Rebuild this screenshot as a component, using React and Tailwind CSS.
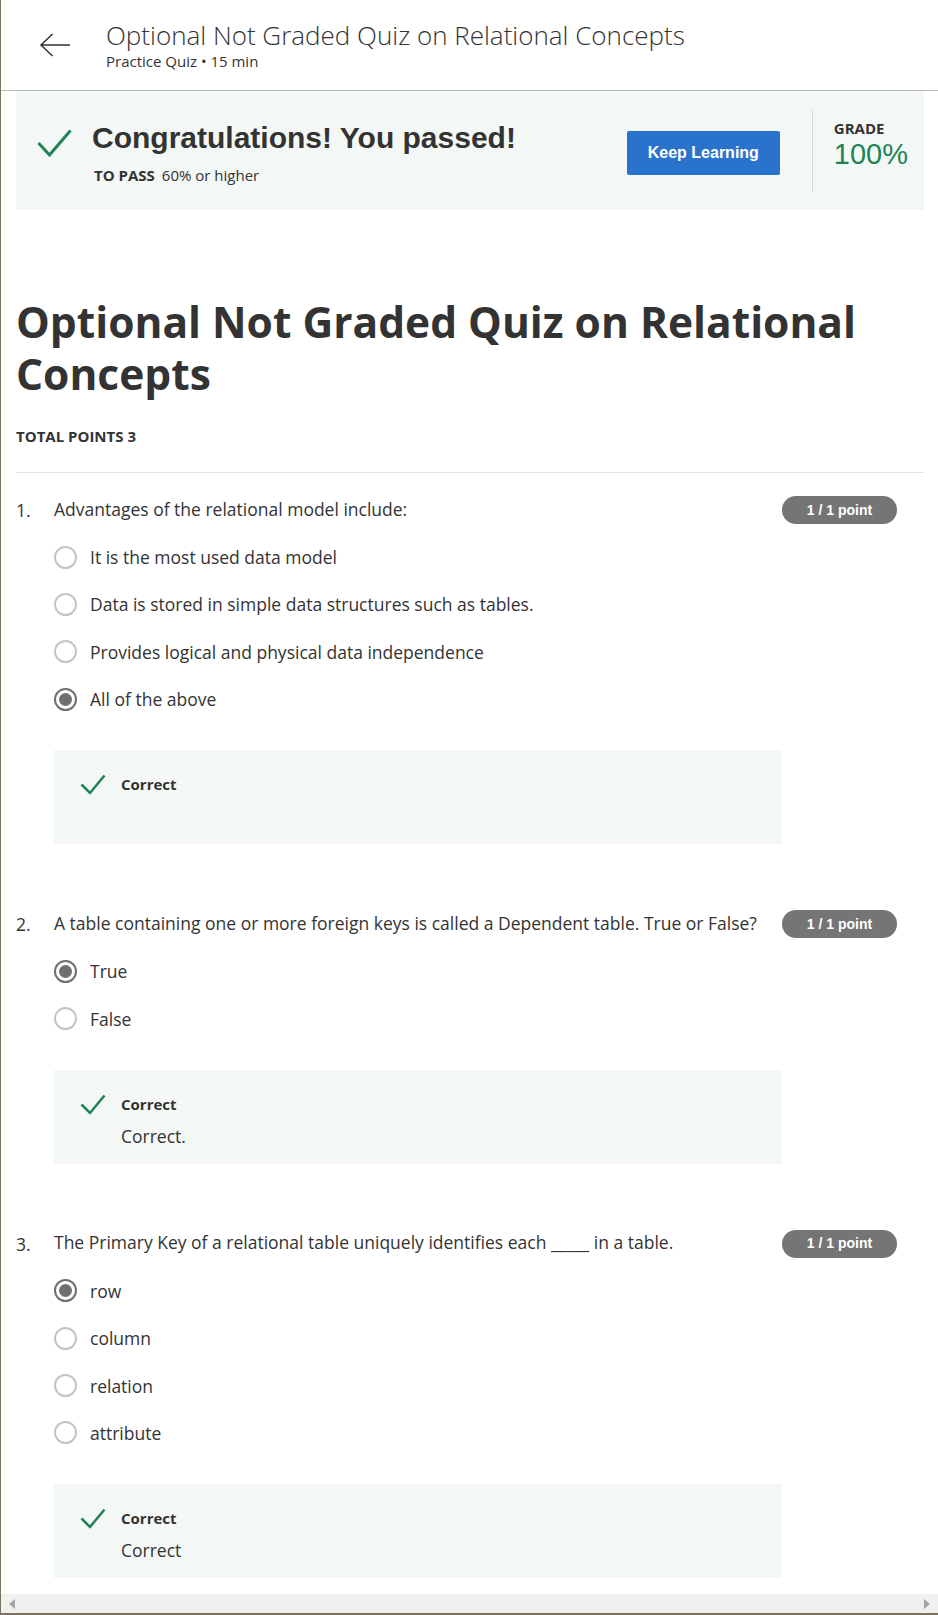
import React from "react";

const font = { fontFamily: '"Open Sans", "Liberation Sans", sans-serif' };

function BigCheck() {
  return (
    <svg width="35" height="28" viewBox="0 0 35 28" fill="none">
      <path d="M1.5 14 L12.5 26 L33.5 1.5" stroke="#1f8354" strokeWidth="3" />
    </svg>
  );
}

function SmallCheck() {
  return (
    <svg width="26" height="21" viewBox="0 0 26 21" fill="none">
      <path d="M1.5 10.5 L10 19 L24.5 1.5" stroke="#1f8354" strokeWidth="2.5" />
    </svg>
  );
}

function Radio({ checked }) {
  if (checked) {
    return (
      <span className="flex h-[23px] w-[23px] shrink-0 items-center justify-center rounded-full border-2 border-[#6f6f6f]">
        <span className="h-[13px] w-[13px] rounded-full bg-[#6f6f6f]" />
      </span>
    );
  }
  return <span className="h-[23px] w-[23px] shrink-0 rounded-full border-2 border-[#c4c4c4]" />;
}

function Question({ num, text, options, selected, explanation }) {
  return (
    <div>
      <div className="flex items-center">
        <span className="w-[38px] shrink-0 text-[17.5px] leading-6 text-[#333]">{num}.</span>
        <span className="-mt-[3px] flex-1 text-[17.5px] leading-6 text-[#333]">{text}</span>
        <span
          className="mr-[27px] flex h-[28px] w-[115px] shrink-0 items-center justify-center rounded-full bg-[#757575] text-[14px] font-bold text-white"
          style={{ fontFamily: '"Liberation Sans", Arial, sans-serif' }}
        >
          1 / 1 point
        </span>
      </div>
      <div className="mt-[9.5px] ml-[38px] flex flex-col">
        {options.map((o, i) => (
          <div key={o} className="flex h-[47.3px] items-center gap-[13px]">
            <Radio checked={i === selected} />
            <span className="text-[17.5px] leading-6 text-[#333]">{o}</span>
          </div>
        ))}
      </div>
      <div className="mt-[27.5px] ml-[38px] w-[728px] bg-[#f3f8f6] pt-[24px] pb-[16px] pl-[26px]">
        <div className="flex items-start gap-[15px]">
          <SmallCheck />
          <div className="flex flex-col">
            <span className="text-[15px] font-bold leading-5 text-[#333]">Correct</span>
            <span className="mt-[10px] h-6 text-[17.5px] leading-6 text-[#333]">{explanation}</span>
          </div>
        </div>
      </div>
    </div>
  );
}

export default function App() {
  return (
    <div
      className="flex h-[1615px] w-[938px] flex-col overflow-hidden border-b-2 border-l border-[#7a7361] bg-white"
      style={font}
    >
      <div className="flex-1 overflow-hidden">
        {/* Header */}
        <div className="flex h-[91px] items-center border-b border-[#b9b9b9] pl-[38px]">
          <svg width="32" height="26" viewBox="0 0 32 26" fill="none" className="shrink-0">
            <path d="M31 13 H2 M13.5 2 L2 13 L13.5 24" stroke="#333" strokeWidth="1.5" />
          </svg>
          <div className="ml-[35px] flex flex-col">
            <span className="text-[26px] font-light leading-[30px] text-[#333]">
              Optional Not Graded Quiz on Relational Concepts
            </span>
            <span className="mt-[1px] text-[15px] leading-5 text-[#333]">Practice Quiz • 15 min</span>
          </div>
        </div>

        <div className="pl-[15px] pr-[14px]">
          {/* Banner */}
          <div className="flex h-[119px] items-center bg-[#f3f8f6] pl-[21px] pr-[16px]">
            <div className="flex items-start gap-[20px] self-start pt-[29px]">
              <div className="mt-[9px]">
                <BigCheck />
              </div>
              <div className="flex flex-col">
                <span
                  className="text-[30px] font-bold leading-[36px] text-[#333]"
                  style={{ fontFamily: '"Liberation Sans", Arial, sans-serif' }}
                >
                  Congratulations! You passed!
                </span>
                <div className="mt-[10px] flex items-baseline pl-[2px] leading-[18px] text-[#333]">
                  <span className="text-[15px] font-bold">TO PASS</span>
                  <span className="ml-[7px] text-[15px]">60% or higher</span>
                </div>
              </div>
            </div>
            <button
              className="ml-auto mt-[5px] h-[44px] w-[153px] rounded-[2px] bg-[#2a73cc] text-[16px] font-bold text-white"
              style={{ fontFamily: '"Liberation Sans", Arial, sans-serif' }}
            >
              Keep Learning
            </button>
            <div className="ml-[32px] h-[83px] w-px bg-[#dcdcdc]" />
            <div className="ml-[21px] flex flex-col self-start pt-[28px]">
              <span className="text-[15px] font-bold leading-[18px] text-[#333]">GRADE</span>
              <span
                className="text-[29px] leading-[34px] text-[#1f8354]"
                style={{ fontFamily: '"Liberation Sans", Arial, sans-serif' }}
              >
                100%
              </span>
            </div>
          </div>

          {/* Title */}
          <h1 className="mt-[86px] text-[42.5px] font-bold leading-[52px] text-[#333]">
            Optional Not Graded Quiz on Relational Concepts
          </h1>
          <div className="mt-[26px] text-[15px] font-bold leading-5 text-[#333]">TOTAL POINTS 3</div>
          <div className="mt-[26px] h-px bg-[#e1e1e1]" />

          <div className="mt-[23px] flex flex-col gap-[66px]">
            <Question
              num={1}
              text="Advantages of the relational model include:"
              options={[
                "It is the most used data model",
                "Data is stored in simple data structures such as tables.",
                "Provides logical and physical data independence",
                "All of the above",
              ]}
              selected={3}
              explanation=""
            />
            <Question
              num={2}
              text="A table containing one or more foreign keys is called a Dependent table. True or False?"
              options={["True", "False"]}
              selected={0}
              explanation="Correct."
            />
            <Question
              num={3}
              text="The Primary Key of a relational table uniquely identifies each _____ in a table."
              options={["row", "column", "relation", "attribute"]}
              selected={0}
              explanation="Correct"
            />
          </div>
        </div>
      </div>

      {/* Horizontal scrollbar */}
      <div className="flex h-[19px] shrink-0 items-center justify-between bg-[#f0f0f0] px-[8px]">
        <svg width="6" height="10" viewBox="0 0 6 10">
          <path d="M6 0 L0 5 L6 10 Z" fill="#a3a3a3" />
        </svg>
        <svg width="6" height="10" viewBox="0 0 6 10">
          <path d="M0 0 L6 5 L0 10 Z" fill="#a3a3a3" />
        </svg>
      </div>
    </div>
  );
}
